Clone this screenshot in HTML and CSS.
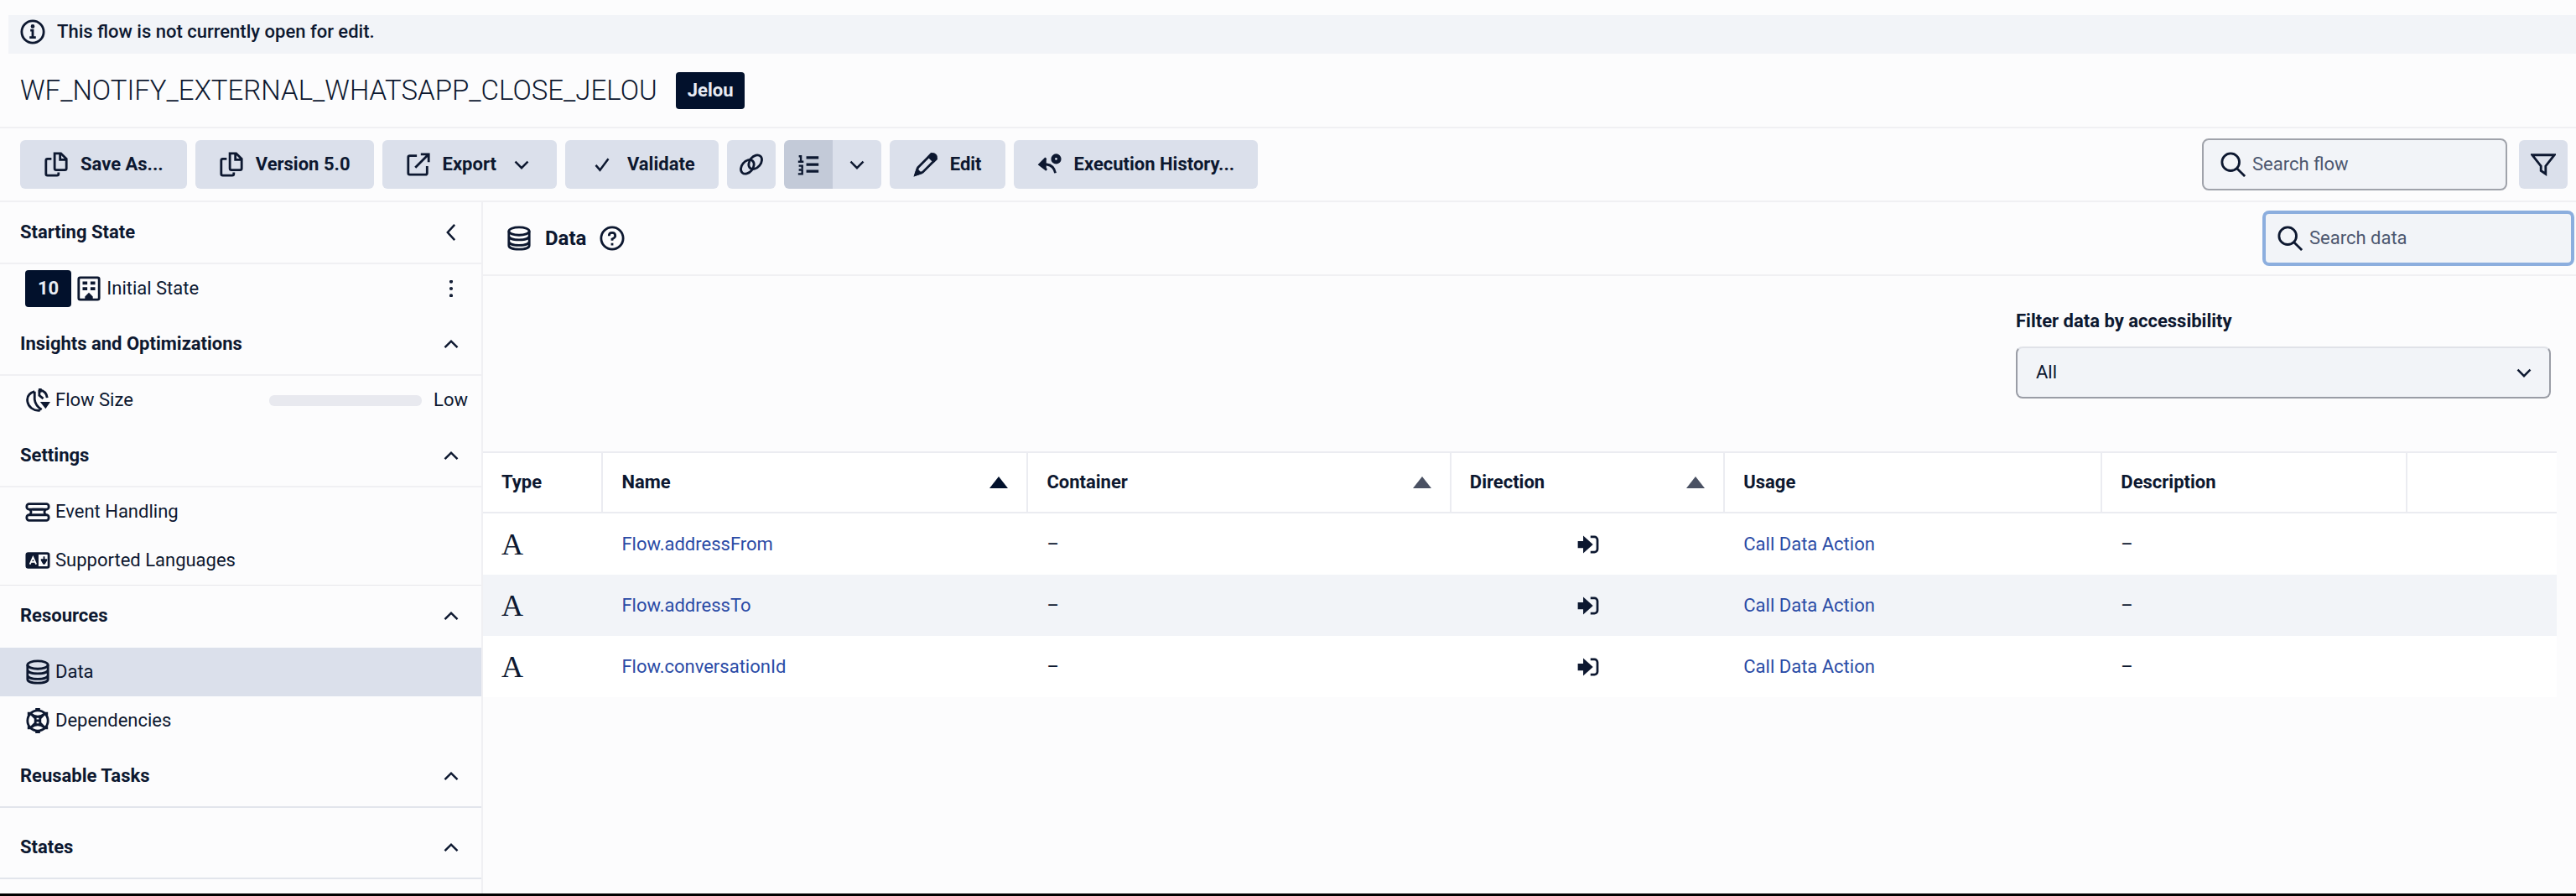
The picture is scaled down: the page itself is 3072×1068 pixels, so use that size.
FILE: index.html
```html
<!DOCTYPE html>
<html lang="en">
<head>
<meta charset="utf-8">
<meta name="viewport" content="width=device-width, initial-scale=1">
<title>WF_NOTIFY_EXTERNAL_WHATSAPP_CLOSE_JELOU</title>
<link rel="stylesheet" href="styles.css">
</head>
<body>
<svg class="sprite" aria-hidden="true">
  <symbol id="i-copy" viewBox="0 0 32 32"><path d="M14 2h8l7 7v12a2 2 0 0 1-2 2H16a2 2 0 0 1-2-2z"/><path d="M21 2v8h8"/><path d="M10 9H5a2 2 0 0 0-2 2v17a2 2 0 0 0 2 2h12a2 2 0 0 0 2-2v-2"/></symbol>
  <symbol id="i-up" viewBox="0 0 24 24"><path d="M3 17l9-9 9 9"/></symbol>
  <symbol id="i-down" viewBox="0 0 24 24"><path d="M3 8l9 9 9-9"/></symbol>
  <symbol id="i-search" viewBox="0 0 32 32"><circle cx="13" cy="13" r="11"/><path d="M21 21l10 10"/></symbol>
  <symbol id="i-db" viewBox="0 0 32 32"><ellipse cx="16" cy="7" rx="13" ry="5"/><path d="M3 7v18c0 3 5 5 13 5s13-2 13-5V7M3 13c0 3 5 5 13 5s13-2 13-5M3 20c0 3 5 5 13 5s13-2 13-5"/></symbol>
  <symbol id="i-in" viewBox="0 0 28 24"><path class="solid" d="M2 9h7V4l9 8-9 8v-5H2z"/><path d="M17 2h5a4 4 0 0 1 4 4v12a4 4 0 0 1-4 4h-5"/></symbol>
</svg>
<div class="page">
  <div class="banner" role="status">
    <svg class="icon" viewBox="0 0 32 32" aria-hidden="true"><circle cx="16" cy="16" r="14"/><path d="M13 14h3v9M12 23h8"/><circle class="solid" cx="16" cy="9" r="1"/></svg>
    <span>This flow is not currently open for edit.</span>
  </div>
  <header class="title-bar">
    <h1>WF_NOTIFY_EXTERNAL_WHATSAPP_CLOSE_JELOU</h1>
    <span class="badge">Jelou</span>
  </header>
  <div class="toolbar">
    <button class="btn"><svg class="icon" aria-hidden="true"><use href="#i-copy"/></svg>Save As...</button>
    <button class="btn"><svg class="icon" aria-hidden="true"><use href="#i-copy"/></svg>Version 5.0</button>
    <button class="btn"><svg class="icon" viewBox="0 0 32 32" aria-hidden="true"><path d="M14 5H5a2 2 0 0 0-2 2v20a2 2 0 0 0 2 2h20a2 2 0 0 0 2-2v-9M19 3h10v10M29 3L12 20"/></svg>Export<svg class="icon small end" aria-hidden="true"><use href="#i-down"/></svg></button>
    <button class="btn"><svg class="icon small check" viewBox="0 0 24 24" aria-hidden="true"><path d="M3 13l6 7L21 4"/></svg>Validate</button>
    <button class="btn square" aria-label="Copy link"><svg class="icon" viewBox="0 0 32 32" aria-hidden="true"><ellipse cx="11" cy="19" rx="10" ry="7" transform="rotate(-50 11 19)"/><ellipse cx="21" cy="13" rx="10" ry="7" transform="rotate(-50 21 13)"/></svg></button>
    <div class="split">
      <button class="btn square on" aria-label="List view"><svg class="icon medium" viewBox="0 0 32 32" aria-hidden="true"><path stroke-width="4" d="M13 6h18M13 16h18M13 26h18"/><path d="M2 4h3v9M1 12h8M2 18h5v4M2 24h5v6H1"/></svg></button>
      <button class="btn square" aria-label="View options"><svg class="icon small" aria-hidden="true"><use href="#i-down"/></svg></button>
    </div>
    <button class="btn"><svg class="icon" viewBox="0 0 32 32" aria-hidden="true"><path d="M3 29l3-9L23 3l6 6-17 17z"/><path class="solid" d="M20 6l3-3q3-1 5 1t1 5l-3 3zM3 29l2-6 4 4z"/></svg>Edit</button>
    <button class="btn"><svg class="icon" viewBox="0 0 32 32" aria-hidden="true"><path d="M11 8L3 16l9 7M3 16h9q9 1 11 11"/><path d="M4 16l6-5v9z" class="solid"/><circle cx="24" cy="9" r="4" stroke-width="5"/></svg>Execution History...</button>
    <label class="search flow-search"><svg class="icon" aria-hidden="true"><use href="#i-search"/></svg><input type="search" placeholder="Search flow" aria-label="Search flow"></label>
    <button class="btn filter" aria-label="Filter"><svg class="icon" viewBox="0 0 32 32" aria-hidden="true"><path d="M2 4h28L19 18v10l-6-4v-6z"/></svg></button>
  </div>
  <div class="body">
    <nav class="sidebar">
      <section>
        <h2>Starting State<button class="toggle" aria-label="Collapse panel"><svg class="icon small" viewBox="0 0 24 24" aria-hidden="true"><path d="M17 1L7 12l10 11"/></svg></button></h2>
        <div class="item"><span class="badge">10</span>
          <svg class="icon" viewBox="0 0 32 32" aria-hidden="true"><rect x="3" y="2" width="26" height="28" rx="2"/><g class="blocks"><path d="M8 7h6v4H8zM18 7h6v4h-6zM8 14h6v4H8zM18 14h6v4h-6zM11 30v-4l5-5 5 5v4z"/></g></svg>
          <a href="#initial">Initial State</a>
          <button class="toggle" aria-label="More actions"><svg class="icon small solid" viewBox="0 0 24 24" aria-hidden="true"><circle cx="12" cy="2" r="1"/><circle cx="12" cy="12" r="1"/><circle cx="12" cy="22" r="1"/></svg></button></div>
      </section>
      <section>
        <h2>Insights and Optimizations<button class="toggle" aria-label="Collapse"><svg class="icon small" aria-hidden="true"><use href="#i-up"/></svg></button></h2>
        <div class="item"><svg class="icon" viewBox="0 0 32 32" aria-hidden="true"><path d="M12 5C5 7 2 12 3 18s7 12 16 11M12 5v10q1 8 9 13M18 3q9 1 10 10M18 3v7l5 4"/><g class="blocks"><path d="M19 18h13l-6 9zM17 1h4v5h-4z"/></g></svg>
          <a href="#size">Flow Size</a><span class="meter"></span><span class="level">Low</span></div>
      </section>
      <section class="ruled">
        <h2>Settings<button class="toggle" aria-label="Collapse"><svg class="icon small" aria-hidden="true"><use href="#i-up"/></svg></button></h2>
        <div class="item"><svg class="icon" viewBox="0 0 32 32" aria-hidden="true"><rect x="2" y="6" width="28" height="7" rx="3"/><rect x="2" y="20" width="28" height="7" rx="3"/><path d="M6 13q3 3 0 7M26 13q-3 3 0 7M9 13h14"/></svg><a href="#events">Event Handling</a></div>
        <div class="item"><svg class="icon" viewBox="0 0 32 32" aria-hidden="true"><rect x="2" y="7" width="28" height="18" rx="2"/><g class="blocks"><path d="M2 7h15v18H2z"/><path d="M20 14h8v2l-3 5h-2l-3-5zM23 11h2v3h-2z"/></g><path class="light" d="M6 21l4-9 4 9M8 18h4"/></svg><a href="#languages">Supported Languages</a></div>
      </section>
      <section>
        <h2 class="plain">Resources<button class="toggle" aria-label="Collapse"><svg class="icon small" aria-hidden="true"><use href="#i-up"/></svg></button></h2>
        <div class="item selected"><svg class="icon" aria-hidden="true"><use href="#i-db"/></svg><a href="#data">Data</a></div>
        <div class="item"><svg class="icon" viewBox="0 0 32 32" aria-hidden="true"><circle cx="16" cy="16" r="13"/><path d="M7 7q9 8 18 0M7 25q9-8 18 0M8 8l5 5v6l-5 5M24 8l-5 5v6l5 5M13 16h6"/><g class="blocks"><path d="M13 0h6v4h-6zM13 28h6v4h-6zM3 5h5v4H3zM24 5h5v4h-5zM3 23h5v4H3zM24 23h5v4h-5z"/></g></svg><a href="#dependencies">Dependencies</a></div>
      </section>
      <section class="empty">
        <h2>Reusable Tasks<button class="toggle" aria-label="Collapse"><svg class="icon small" aria-hidden="true"><use href="#i-up"/></svg></button></h2>
      </section>
      <section class="empty">
        <h2>States<button class="toggle" aria-label="Collapse"><svg class="icon small" aria-hidden="true"><use href="#i-up"/></svg></button></h2>
      </section>
    </nav>
    <main>
      <div class="panel-head">
        <svg class="icon" aria-hidden="true"><use href="#i-db"/></svg>
        <h2>Data</h2>
        <button class="help" aria-label="Help"><svg class="icon" viewBox="0 0 32 32" aria-hidden="true"><circle cx="16" cy="16" r="14"/><path d="M12 13q0-4 4-4t4 4q0 2-4 4v2M16 22v3"/></svg></button>
        <label class="search focused"><svg class="icon" aria-hidden="true"><use href="#i-search"/></svg><input type="search" placeholder="Search data" aria-label="Search data"></label>
      </div>
      <div class="filters">
        <div class="field">
          <label for="access">Filter data by accessibility</label>
          <div class="select"><select id="access"><option>All</option></select><svg class="icon small" aria-hidden="true"><use href="#i-down"/></svg></div>
        </div>
      </div>
      <div class="table-wrap">
      <table>
        <colgroup><col class="c-type"><col class="c-name"><col class="c-container"><col class="c-direction"><col class="c-usage"><col class="c-description"><col></colgroup>
        <thead><tr>
          <th>Type</th>
          <th><div class="sort active">Name<svg viewBox="0 0 22 14" aria-hidden="true"><path d="M11 0l11 14H0z"/></svg></div></th>
          <th><div class="sort">Container<svg viewBox="0 0 22 14" aria-hidden="true"><path d="M11 0l11 14H0z"/></svg></div></th>
          <th><div class="sort">Direction<svg viewBox="0 0 22 14" aria-hidden="true"><path d="M11 0l11 14H0z"/></svg></div></th>
          <th>Usage</th><th>Description</th><th></th>
        </tr></thead>
        <tbody>
          <tr><td class="type">A</td><td><a href="#from">Flow.addressFrom</a></td><td>–</td><td class="direction"><svg class="icon" aria-label="Input"><use href="#i-in"/></svg></td><td><a href="#action">Call Data Action</a></td><td>–</td><td></td></tr>
          <tr><td class="type">A</td><td><a href="#to">Flow.addressTo</a></td><td>–</td><td class="direction"><svg class="icon" aria-label="Input"><use href="#i-in"/></svg></td><td><a href="#action">Call Data Action</a></td><td>–</td><td></td></tr>
          <tr><td class="type">A</td><td><a href="#id">Flow.conversationId</a></td><td>–</td><td class="direction"><svg class="icon" aria-label="Input"><use href="#i-in"/></svg></td><td><a href="#action">Call Data Action</a></td><td>–</td><td></td></tr>
        </tbody>
      </table>
      </div>
    </main>
  </div>
</div>
</body>
</html>
```
FILE: styles.css
```css
:root {
  --ink: #0d1830;
  --navy: #02112c;
  --line: #f0f0f3;
  --fill: #f2f4f8;
  --control: #dbe0eb;
  --link: #2a4ba6;
}
* { box-sizing: border-box; }
body {
  margin: 0;
  background: #fcfcfd;
  color: var(--ink);
  font: 22px/28px Roboto, "Liberation Sans", sans-serif;
}
h1, h2 { margin: 0; font-size: inherit; }
button, input, select { font: inherit; color: inherit; }
button { border: 0; padding: 0; background: none; }
a { color: inherit; text-decoration: none; }
.sprite { display: none; }
.icon {
  width: 30px;
  height: 30px;
  flex: none;
  fill: none;
  stroke: currentColor;
  stroke-width: 3;
}
.icon.small { width: 20px; height: 20px; }
.icon.medium { width: 26px; height: 26px; }
.solid { fill: currentColor; }
.blocks { fill: currentColor; stroke: none; }
.light { stroke: #fff; stroke-width: 2; }

.page {
  min-height: 100vh;
  display: flex;
  flex-direction: column;
  padding-top: 18px;
  border-bottom: 3px solid #000;
}
.banner {
  display: flex;
  align-items: center;
  gap: 14px;
  height: 46px;
  margin-left: 10px;
  padding: 0 14px 6px;
  background: var(--fill);
  font-weight: 500;
}
.title-bar {
  display: flex;
  align-items: center;
  gap: 22px;
  height: 89px;
  padding: 0 24px;
  border-bottom: 2px solid var(--line);
}
.title-bar h1 { font-size: 33px; font-weight: 300; line-height: 40px; }
.badge {
  display: grid;
  place-items: center;
  height: 44px;
  padding: 0 14px;
  border-radius: 4px;
  background: var(--navy);
  color: #e8ecf4;
  font-weight: 700;
}
.toolbar {
  display: flex;
  align-items: center;
  gap: 10px;
  height: 88px;
  padding: 0 10px 0 24px;
  border-bottom: 2px solid var(--line);
}
.btn {
  display: flex;
  align-items: center;
  justify-content: center;
  gap: 14px;
  height: 58px;
  padding: 0 28px;
  border-radius: 6px;
  background: var(--control);
  font-weight: 700;
}
.btn .end { margin: 0 4px 0 6px; }
.btn .check { margin: 0 6px; }
.btn.square, .btn.filter { width: 58px; padding: 0; }
.split { display: flex; overflow: hidden; border-radius: 6px; }
.split .btn { border-radius: 0; }
.split .on { background: #c3cad8; }
.search {
  display: flex;
  align-items: center;
  gap: 8px;
  height: 62px;
  width: 364px;
  padding: 0 20px;
  border: 2px solid #a0a3ab;
  border-radius: 8px;
  background: var(--fill);
}
.search input {
  min-width: 0;
  flex: 1;
  padding: 0;
  border: 0;
  outline: 0;
  background: none;
}
.search input::placeholder { color: #4d5870; opacity: 1; }
.flow-search { margin: 0 4px 0 auto; }

.body { flex: 1; display: flex; }
.sidebar { flex: none; width: 576px; border-right: 2px solid var(--line); }
.sidebar section { border-bottom: 1px solid transparent; }
.sidebar .ruled { border-color: #e6e7eb; }
.sidebar h2 {
  display: flex;
  align-items: center;
  justify-content: space-between;
  height: 74px;
  padding: 0 24px;
  border-bottom: 2px solid var(--line);
  font-weight: 700;
}
.sidebar h2.plain { border-color: transparent; }
.sidebar .empty h2 { border-color: #e2e5ec; }
.empty + .empty { margin-top: 10px; }
.toggle { display: grid; place-items: center; width: 24px; height: 28px; }
.item {
  display: flex;
  align-items: center;
  gap: 6px;
  height: 58px;
  padding: 0 16px 0 30px;
}
.item .badge { padding: 0 15px; }
.item a { flex: 1; }
.item .toggle { margin-right: 8px; }
.item .level { margin-left: 8px; }
.item.selected { background: var(--control); }
.meter { width: 182px; height: 13px; border-radius: 6px; background: #e8e9ef; }

main { flex: 1; min-width: 0; }
.panel-head {
  display: flex;
  align-items: center;
  height: 88px;
  padding: 0 2px 0 28px;
  border-bottom: 2px solid var(--line);
}
.panel-head h2 { margin: 0 16px; font-size: 24px; font-weight: 700; }
.panel-head .search { width: 372px; height: 66px; margin-left: auto; padding: 0 14px; }
.search.focused { border: 4px solid #8caede; }
.help { display: grid; }
.filters { display: flex; justify-content: flex-end; padding: 40px 30px 63px; }
.field { width: 638px; }
.field label { display: block; margin-bottom: 16px; font-weight: 700; }
.select { display: grid; align-items: center; justify-items: end; }
.select > * { grid-area: 1 / 1; }
.select select {
  appearance: none;
  width: 100%;
  height: 62px;
  padding: 0 22px;
  border: 2px solid #9a9da6;
  border-top-color: #e0e2e8;
  border-radius: 8px;
  background: var(--fill);
}
.select .icon { margin-right: 22px; pointer-events: none; }

.table-wrap { padding-right: 23px; }
table {
  width: 100%;
  table-layout: fixed;
  border-collapse: separate;
  border-spacing: 0;
  background: #fff;
}
.c-type { width: 5.8%; }
.c-name { width: 20.5%; }
.c-container { width: 20.4%; }
.c-direction { width: 13.2%; }
.c-usage { width: 18.2%; }
.c-description { width: 14.7%; }
th, td { height: 73px; padding: 0 22px; text-align: left; vertical-align: middle; }
th {
  height: 74px;
  border: solid #ebecf1;
  border-width: 2px 2px 2px 0;
  font-weight: 700;
}
th:last-child { border-right: 0; }
.sort { display: flex; align-items: center; justify-content: space-between; }
.sort svg { width: 22px; height: 14px; fill: #4a5163; }
.sort.active svg { fill: var(--navy); }
tbody tr:nth-child(even) { background: var(--fill); }
td a { color: var(--link); }
td.type { font: 36px/40px "Liberation Serif", serif; }
td.direction { text-align: center; }
td.direction .icon { display: block; width: 26px; height: 22px; margin: 0 auto; }
```
